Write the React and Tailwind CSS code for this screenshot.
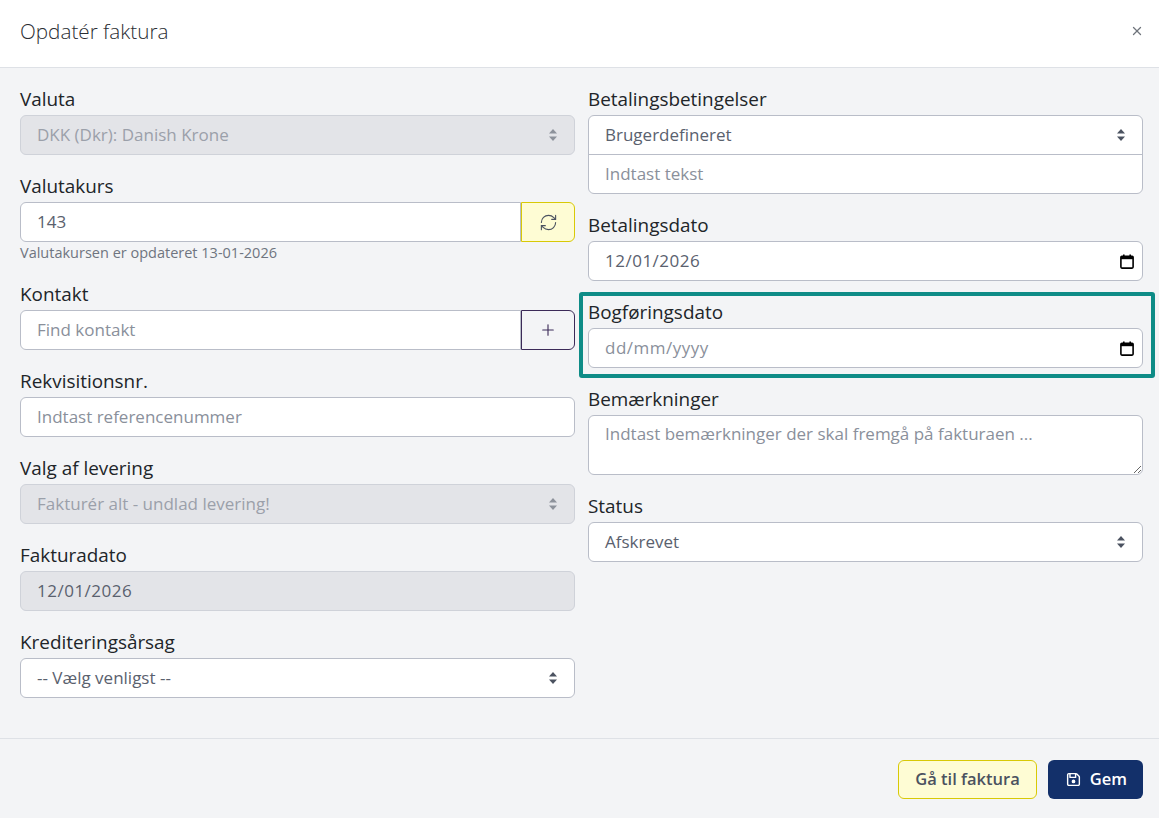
import { RefreshCw, Plus, X } from 'lucide-react';
import { FaRegFloppyDisk } from 'react-icons/fa6';

const font = { fontFamily: '"Open Sans", "Liberation Sans", sans-serif' };

const SortArrows = ({ muted }) => (
    <svg width="10" height="14" viewBox="0 0 10 14" className={muted ? 'text-[#8d929b]' : 'text-[#4b5260]'}>
        <path d="M5 1 L9 5.5 H1 Z" fill="currentColor" />
        <path d="M5 13 L9 8.5 H1 Z" fill="currentColor" />
    </svg>
);

const CalendarIcon = () => (
    <svg width="14" height="15" viewBox="0 0 14 15" className="text-black">
        <rect x="0.9" y="2.2" width="12.2" height="11.9" rx="1" fill="none" stroke="currentColor" strokeWidth="1.6" />
        <rect x="0.9" y="2.2" width="12.2" height="3" fill="currentColor" />
        <rect x="3" y="0.5" width="1.6" height="2.5" fill="currentColor" />
        <rect x="9.4" y="0.5" width="1.6" height="2.5" fill="currentColor" />
    </svg>
);

const Label = ({ children }) => (
    <div className="text-[18.9px] leading-[25px] text-[#212529] mb-[3px]">{children}</div>
);

const Field = ({ label, children, className = '' }) => (
    <div className={`mb-[19px] ${className}`}>
        <Label>{label}</Label>
        {children}
    </div>
);

const Select = ({ value, disabled }) => (
    <div className={`h-10 rounded-md border flex items-center justify-between pl-4 pr-[16px] text-[17px] ${disabled ? 'bg-[#e3e4e8] border-[#cfd2d9] text-[#9ba0aa]' : 'bg-white border-[#b9bdc8] text-[#5a616e]'}`}>
        <span>{value}</span>
        <SortArrows muted={disabled} />
    </div>
);

const TextBox = ({ value, placeholder, className = 'rounded-md' }) => (
    <div className={`h-10 border border-[#b9bdc8] bg-white flex items-center pl-4 text-[17px] ${className} ${value ? 'text-[#5a616e]' : 'text-[#8a909b]'}`}>
        {value || placeholder}
    </div>
);

const DateBox = ({ value, placeholder }) => (
    <div className="h-10 rounded-md border border-[#b9bdc8] bg-white flex items-center justify-between pl-4 pr-[8px] text-[17px]">
        <span className={`tracking-[0.5px] ${value ? 'text-[#5a616e]' : 'text-[#8a909b]'}`}>{value || placeholder}</span>
        <CalendarIcon />
    </div>
);

export default function App() {
    return (
        <div style={font} className="w-full h-[818px] flex flex-col bg-[#f3f4f6]">
            {/* header */}
            <div className="h-[68px] shrink-0 bg-white border-b border-[#dee1e6] flex items-center justify-between pl-5 pr-[15px]">
                <h1 className="text-[20.7px] font-light text-[#2a2d33] -mt-[3px]">Opdatér faktura</h1>
                <X className="w-[14px] h-[14px] text-[#6f747c] -mt-[6px]" strokeWidth={2.2} />
            </div>

            {/* body */}
            <div className="flex-1 grid grid-cols-2 gap-x-[13px] pl-5 pr-4 pt-[19px]">
                <div className="flex flex-col">
                    <Field label="Valuta">
                        <Select value="DKK (Dkr): Danish Krone" disabled />
                    </Field>

                    <div className="mb-[19px]">
                        <Label>Valutakurs</Label>
                        <div className="flex h-10">
                            <div className="flex-1 bg-white border border-[#b9bdc8] rounded-l-md flex items-center pl-4 text-[17px] text-[#5a616e]">143</div>
                            <div className="w-[54px] bg-[#fefcd4] border border-[#d8c906] rounded-r-md flex items-center justify-center">
                                <RefreshCw className="w-[19px] h-[19px] text-[#4b5260]" strokeWidth={1.4} />
                            </div>
                        </div>
                        <div className="text-[14.5px] leading-[20px] mt-[1px] text-[#6f7580]">Valutakursen er opdateret 13-01-2026</div>
                    </div>

                    <Field label="Kontakt">
                        <div className="flex h-10">
                            <div className="flex-1 bg-white border border-[#b9bdc8] rounded-l-md flex items-center pl-4 text-[17px] text-[#8a909b]">Find kontakt</div>
                            <div className="w-[54px] border border-[#3b2a58] rounded-r-md flex items-center justify-center">
                                <Plus className="w-[18px] h-[18px] text-[#3b2a58]" strokeWidth={1.5} />
                            </div>
                        </div>
                    </Field>

                    <Field label="Rekvisitionsnr.">
                        <TextBox placeholder="Indtast referencenummer" />
                    </Field>

                    <Field label="Valg af levering">
                        <Select value="Fakturér alt - undlad levering!" disabled />
                    </Field>

                    <Field label="Fakturadato">
                        <div className="h-10 rounded-md border border-[#cfd2d9] bg-[#e3e4e8] flex items-center pl-4 text-[17px] tracking-[0.5px] text-[#5a616e]">12/01/2026</div>
                    </Field>

                    <Field label="Krediteringsårsag">
                        <Select value="-- Vælg venligst --" />
                    </Field>
                </div>

                <div className="flex flex-col">
                    <Field label="Betalingsbetingelser">
                        <div className="rounded-md border border-[#b9bdc8] bg-white">
                            <div className="h-[39px] border-b border-[#b9bdc8] flex items-center justify-between pl-4 pr-[16px] text-[17px] text-[#5a616e]">
                                <span>Brugerdefineret</span>
                                <SortArrows />
                            </div>
                            <div className="h-[38px] flex items-center pl-4 text-[17px] text-[#8a909b]">Indtast tekst</div>
                        </div>
                    </Field>

                    <Field label="Betalingsdato">
                        <DateBox value="12/01/2026" />
                    </Field>

                    <div className="relative mb-[19px]">
                        <Label>Bogføringsdato</Label>
                        <DateBox placeholder="dd/mm/yyyy" />
                        {/* highlight overlay */}
                        <div className="absolute -left-[9px] -right-[12px] -top-[8px] -bottom-[10px] border-4 rounded-[3px] border-[#0e8c87] pointer-events-none" />
                    </div>

                    <Field label="Bemærkninger">
                        <textarea
                            readOnly
                            placeholder="Indtast bemærkninger der skal fremgå på fakturaen ..."
                            className="block w-full h-[60px] rounded-md border border-[#b9bdc8] bg-white px-4 py-[6px] text-[17px] leading-[24px] placeholder:text-[#8a909b] outline-none"
                        />
                    </Field>

                    <Field label="Status">
                        <Select value="Afskrevet" />
                    </Field>
                </div>
            </div>

            {/* footer */}
            <div className="h-[80px] shrink-0 border-t border-[#dee1e6] flex items-start justify-end gap-[11px] pt-[21px] pr-4">
                <button className="h-[39px] px-[16px] rounded-md bg-[#fefcd4] border border-[#d8c906] text-[16.5px] font-semibold text-[#4b5260]">
                    Gå til faktura
                </button>
                <button className="h-[39px] pl-[18px] pr-[16px] rounded-md bg-[#13306a] text-white text-[16.5px] font-semibold flex items-center gap-[9px]">
                    <FaRegFloppyDisk className="w-[15px] h-[15px]" />
                    Gem
                </button>
            </div>
        </div>
    );
}
